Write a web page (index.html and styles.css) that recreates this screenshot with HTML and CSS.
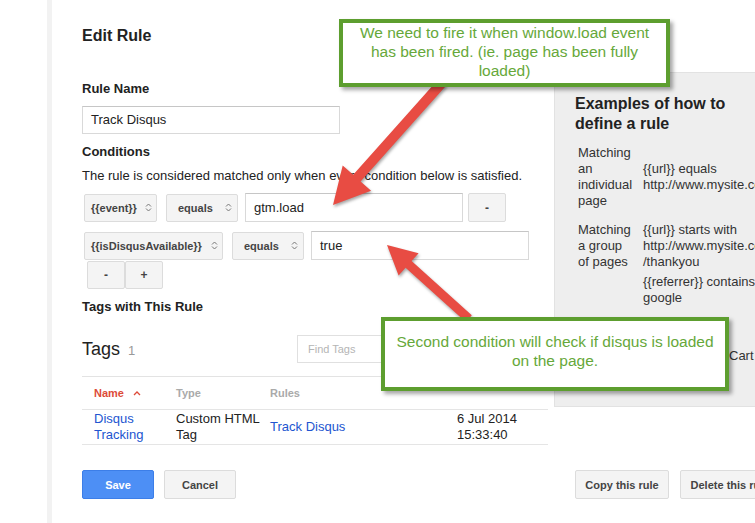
FILE: index.html
```html
<!DOCTYPE html>
<html>
<head>
<meta charset="utf-8">
<title>Edit Rule</title>
<link rel="stylesheet" href="styles.css">
</head>
<body>
<div class="page">
  <div class="gutter"></div>
  <div class="strip"></div>
  <main class="main">
    <div class="top">
      <section class="form">
        <h1 class="title">Edit Rule</h1>
        <div class="label label-first">Rule Name</div>
        <div class="text-input name-input">Track Disqus</div>
        <div class="label label-cond">Conditions</div>
        <div class="desc">The rule is considered matched only when every condition below is satisfied.</div>

        <div class="cond-row">
          <div class="select sel-var1"><span>{{event}}</span><svg class="chev" width="7" height="11" viewBox="0 0 7 11"><path d="M1 4.5 L3.5 2 L6 4.5 M1 6.5 L3.5 9 L6 6.5" fill="none" stroke="#777" stroke-width="1"/></svg></div>
          <div class="select sel-op"><span>equals</span><svg class="chev" width="7" height="11" viewBox="0 0 7 11"><path d="M1 4.5 L3.5 2 L6 4.5 M1 6.5 L3.5 9 L6 6.5" fill="none" stroke="#777" stroke-width="1"/></svg></div>
          <div class="text-input cond-input">gtm.load</div>
          <div class="btn-small row-remove">-</div>
        </div>

        <div class="cond-row">
          <div class="select sel-var2"><span>{{isDisqusAvailable}}</span><svg class="chev" width="7" height="11" viewBox="0 0 7 11"><path d="M1 4.5 L3.5 2 L6 4.5 M1 6.5 L3.5 9 L6 6.5" fill="none" stroke="#777" stroke-width="1"/></svg></div>
          <div class="select sel-op"><span>equals</span><svg class="chev" width="7" height="11" viewBox="0 0 7 11"><path d="M1 4.5 L3.5 2 L6 4.5 M1 6.5 L3.5 9 L6 6.5" fill="none" stroke="#777" stroke-width="1"/></svg></div>
          <div class="text-input cond-input">true</div>
        </div>

        <div class="add-remove">
          <div class="btn-small pm">-</div>
          <div class="btn-small pm">+</div>
        </div>

        <div class="label label-tags">Tags with This Rule</div>

        <div class="tags-head">
          <h2 class="tags-title">Tags</h2>
          <span class="tags-count">1</span>
          <div class="find">Find Tags</div>
        </div>

        <table class="tags-table">
          <colgroup>
            <col class="c-name"><col class="c-type"><col class="c-rules"><col class="c-date">
          </colgroup>
          <thead>
            <tr>
              <th class="sorted">Name <svg class="caret" width="8" height="6" viewBox="0 0 8 6"><path d="M1 5 L4 2 L7 5" fill="none" stroke="#dd4b39" stroke-width="1.3"/></svg></th>
              <th>Type</th>
              <th>Rules</th>
              <th></th>
            </tr>
          </thead>
          <tbody>
            <tr>
              <td><span class="link">Disqus Tracking</span></td>
              <td>Custom&nbsp;HTML Tag</td>
              <td><span class="link">Track Disqus</span></td>
              <td>6 Jul 2014 15:33:40</td>
            </tr>
          </tbody>
        </table>
      </section>

      <aside class="examples">
        <h3 class="ex-title">Examples of how to<br>define a rule</h3>
        <div class="ex-row ex-r1">
          <div class="ex-label"><div>Matching</div><div>an</div><div>individual</div><div>page</div></div>
          <div class="ex-val mid"><div>{{url}} equals</div><div>http://www.mysite.com</div></div>
        </div>
        <div class="ex-row ex-r2">
          <div class="ex-label"><div>Matching</div><div>a group</div><div>of pages</div></div>
          <div class="ex-val"><div>{{url}} starts with</div><div>http://www.mysite.com</div><div>/thankyou</div></div>
        </div>
        <div class="ex-row ex-r3">
          <div class="ex-label"></div>
          <div class="ex-val"><div>{{referrer}} contains</div><div>google</div></div>
        </div>
        <div class="ex-row ex-r4">
          <div class="ex-label"></div>
          <div class="ex-val"><div>/product/addToCart</div></div>
        </div>
      </aside>
    </div>

    <div class="actions">
      <div class="actions-left">
        <div class="btn btn-primary">Save</div>
        <div class="btn btn-cancel">Cancel</div>
      </div>
      <div class="btn btn-copy">Copy this rule</div>
      <div class="btn btn-delete">Delete this rule</div>
    </div>
  </main>

  <svg class="arrows" width="755" height="523" viewBox="0 0 755 523">
    <polygon points="333,205 371.1,190.7 360.6,181.4 446.5,85.2 439,78.6 353.2,174.8 342.7,165.5" fill="#e84c43"/>
    <polygon points="387,245 398.6,275.6 405.6,267.7 465.8,322 471.8,315.3 411.6,261.1 418.6,253.2" fill="#e84c43"/>
  </svg>

  <div class="callout callout-1">We need to fire it when window.load event<br>has been fired. (ie. page has been fully<br>loaded)</div>
  <div class="callout callout-2">Second condition will check if disqus is loaded<br>on the page.</div>
</div>
</body>
</html>
```

FILE: styles.css
```css
html, body {
  margin: 0;
  padding: 0;
  background: #fff;
}

body {
  font-family: "Liberation Sans", Arial, sans-serif;
  font-size: 13px;
  line-height: 16px;
  color: #222;
}

.page {
  position: relative;
  display: flex;
  width: 755px;
  height: 523px;
  overflow: hidden;
}

.gutter {
  flex: 0 0 47px;
}

.strip {
  flex: 0 0 5px;
  background: #f2f2f2;
}

.main {
  flex: 0 0 auto;
  padding: 26px 0 0 30px;
}

.top {
  display: flex;
  align-items: flex-start;
}

.form {
  flex: 0 0 466px;
  width: 466px;
}

.title {
  margin: 0;
  font-size: 16px;
  line-height: 20px;
  font-weight: bold;
  color: #222;
}

.label {
  font-weight: bold;
  line-height: 16px;
}

.label-first { margin-top: 35px; }
.label-cond { margin-top: 10px; }
.label-tags { margin-top: 10px; }

.text-input {
  box-sizing: border-box;
  border: 1px solid #d9d9d9;
  border-top-color: #c6c6c6;
  background: #fff;
  padding: 0 8px;
  display: flex;
  align-items: center;
  color: #222;
  font-size: 13px;
}

.name-input {
  margin-top: 9px;
  width: 258px;
  height: 28px;
}

.desc {
  margin-top: 8px;
  white-space: nowrap;
}

.cond-row {
  display: flex;
  align-items: center;
  height: 29px;
  margin-top: 9px;
  margin-left: 2px;
}

.select {
  box-sizing: border-box;
  height: 28px;
  display: flex;
  align-items: center;
  justify-content: space-between;
  border: 1px solid #dcdcdc;
  border-radius: 2px;
  background: #f4f4f4;
  color: #444;
  font-size: 11px;
  font-weight: bold;
  white-space: nowrap;
}

.chev { flex: 0 0 auto; }

.sel-var1 {
  width: 73px;
  padding: 0 4px 0 6px;
}

.sel-var2 {
  width: 139px;
  padding: 0 4px 0 6px;
}

.sel-op {
  width: 72px;
  margin-left: 9px;
  padding: 0 5px 0 11px;
}

.cond-input {
  width: 218px;
  height: 29px;
  margin-left: 7px;
}

.btn-small {
  box-sizing: border-box;
  width: 38px;
  height: 29px;
  display: flex;
  align-items: center;
  justify-content: center;
  border: 1px solid #dcdcdc;
  border-radius: 2px;
  background: #f4f4f4;
  color: #444;
  font-size: 12px;
  font-weight: bold;
}

.row-remove {
  margin-left: 5px;
}

.add-remove {
  display: flex;
  margin-top: 1px;
  margin-left: 5px;
}

.add-remove .pm {
  height: 28px;
}

.tags-head {
  display: flex;
  align-items: center;
  height: 28px;
  margin-top: 20px;
}

.tags-title {
  margin: 0;
  font-size: 18px;
  line-height: 24px;
  font-weight: normal;
  color: #222;
}

.tags-count {
  margin-left: 8px;
  margin-top: 4px;
  color: #999;
  font-size: 13px;
}

.find {
  box-sizing: border-box;
  margin-left: auto;
  width: 251px;
  height: 28px;
  border: 1px solid #e0e0e0;
  padding: 0 10px;
  display: flex;
  align-items: center;
  color: #b5b5b5;
  font-size: 11px;
}

.tags-table {
  margin-top: 13px;
  width: 466px;
  table-layout: fixed;
  border-collapse: collapse;
  border-top: 1px solid #e3e3e3;
}

.c-name { width: 82px; }
.c-type { width: 94px; }
.c-rules { width: 187px; }
.c-date { width: 103px; }

.tags-table th {
  text-align: left;
  font-size: 11px;
  line-height: 13px;
  font-weight: bold;
  color: #aaa;
  padding: 10px 0 9px 12px;
  border-bottom: 1px solid #e5e5e5;
}

.tags-table th.sorted {
  color: #dd4b39;
}

.caret {
  margin-left: 6px;
  vertical-align: 1px;
}

.tags-table td {
  padding: 1px 0 1px 12px;
  line-height: 16px;
  vertical-align: middle;
  border-bottom: 1px solid #e5e5e5;
  color: #222;
}

.link {
  color: #2255d0;
}

.examples {
  flex: 0 0 240px;
  box-sizing: border-box;
  margin-left: 6px;
  margin-top: 46px;
  height: 335px;
  background: #eeeeee;
  border: 1px solid #e2e2e2;
  border-right: 0;
  padding: 21px 0 0 20px;
  overflow: hidden;
  color: #333;
}

.ex-title {
  margin: 0;
  font-size: 16px;
  line-height: 20px;
  font-weight: bold;
  color: #222;
}

.ex-row {
  display: grid;
  grid-template-columns: 56px auto;
  column-gap: 9px;
  margin-left: 3px;
  white-space: nowrap;
}

.ex-val.mid { align-self: center; }
.ex-r1 { margin-top: 11px; }
.ex-r2 { margin-top: 13px; }
.ex-r3 { margin-top: 4px; }
.ex-r4 { margin-top: 42px; }

.actions {
  display: flex;
  margin-top: 25px;
}

.actions-left {
  flex: 0 0 493px;
  display: flex;
}

.btn {
  box-sizing: border-box;
  height: 29px;
  display: flex;
  align-items: center;
  justify-content: center;
  border: 1px solid #dcdcdc;
  border-radius: 2px;
  background: #f4f4f4;
  color: #444;
  font-size: 11px;
  font-weight: bold;
  white-space: nowrap;
}

.btn-primary {
  width: 72px;
  background: #4d8ff5;
  border-color: #3c7ee8;
  color: #fff;
}

.btn-cancel {
  width: 72px;
  margin-left: 10px;
}

.btn-copy {
  width: 94px;
}

.btn-delete {
  width: 100px;
  margin-left: 11px;
}

.arrows {
  position: absolute;
  left: 0;
  top: 0;
  z-index: 2;
  pointer-events: none;
  filter: drop-shadow(1px 2px 1.5px rgba(0, 0, 0, 0.35));
}

.callout {
  position: absolute;
  z-index: 3;
  box-sizing: border-box;
  border: 4px solid #5d9e2f;
  background: #fff;
  color: #66a83a;
  text-align: center;
  font-size: 15.5px;
  line-height: 19px;
  white-space: nowrap;
  box-shadow: 3px 3px 4px rgba(0, 0, 0, 0.35);
}

.callout-1 {
  left: 339px;
  top: 19px;
  width: 331px;
  height: 68px;
  padding-top: 0;
}

.callout-2 {
  left: 381px;
  top: 317px;
  width: 348px;
  height: 74px;
  padding-top: 11px;
}
```
